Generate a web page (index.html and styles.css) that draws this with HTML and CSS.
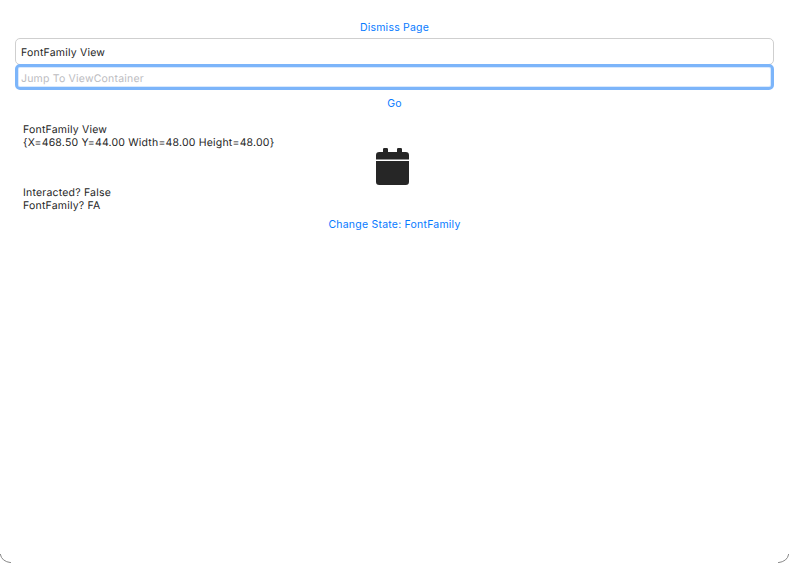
FILE: index.html
```html
<!DOCTYPE html>
<html lang="en">
<head>
<meta charset="utf-8">
<title>FontFamily View</title>
<link rel="stylesheet" href="styles.css">
</head>
<body>
<main class="window">
  <button class="link dismiss">Dismiss Page</button>
  <div class="field"><span>FontFamily View</span></div>
  <div class="field focused"><span class="placeholder">Jump To ViewContainer</span></div>
  <button class="link go">Go</button>
  <section class="details">
    <div class="text">FontFamily View<br>{X=468.50 Y=44.00 Width=48.00 Height=48.00}</div>
    <svg class="calendar" viewBox="0 0 36 38" aria-hidden="true">
      <path d="M1 11.500V7.300Q1 4 4.300 4H8V1.200Q8 0 9.200 0h2.600Q13 0 13 1.200V4h9V1.200Q22 0 23.200 0h2.600Q27 0 27 1.200V4h3.700Q34 4 34 7.300V11.500ZM1 13h33V33.700Q34 37 30.700 37h-26.400Q1 37 1 33.700Z"/>
    </svg>
    <div class="text">Interacted? False<br>FontFamily? FA</div>
  </section>
  <button class="link state">Change State: FontFamily</button>
  <svg class="corner left" viewBox="0 0 12 12" aria-hidden="true"><path d="M.3 3Q1.500 10.500 11 11.700"/></svg>
  <svg class="corner right" viewBox="0 0 12 12" aria-hidden="true"><path d="M11.700 3Q10.500 10.500 1 11.700"/></svg>
</main>
</body>
</html>
```
FILE: styles.css
```css
* { box-sizing: border-box; }
body {
  margin: 0;
  background: #fff;
  font: 10.5px/13px Inter, sans-serif;
  letter-spacing: 0.2px;
  text-rendering: geometricPrecision;
  color: #262626;
}
.window {
  position: relative;
  display: flex;
  flex-direction: column;
  height: 563px;
  padding: 21px 15px 0;
  overflow: hidden;
}
.link {
  align-self: center;
  height: 13px;
  padding: 0;
  border: 0;
  background: none;
  font: inherit;
  letter-spacing: 0.22px;
  color: #067aff;
  white-space: nowrap;
}
.dismiss { margin-bottom: 4px; }
.field {
  display: flex;
  align-items: center;
  height: 27px;
  padding: 1px 5px 0;
  border: 1px solid #cfcfcf;
  border-radius: 5px;
}
.focused {
  height: 26px;
  margin-top: -1px;
  padding: 2px 3px 0;
  border: 3px solid #7cb5fa;
  box-shadow: inset 0 0 0 1px #d9e9fd;
}
.placeholder { color: #bcbcbf; }
.go { margin-top: 7px; }
.details {
  display: flex;
  flex-direction: column;
  margin-top: 13px;
  padding-left: 8px;
}
.text { white-space: nowrap; }
.calendar {
  width: 36px;
  height: 38px;
  margin: -1px 0 0 352px;
  fill: #262626;
}
.state { margin-top: 6px; }
.corner {
  position: absolute;
  bottom: 0;
  width: 12px;
  height: 12px;
  fill: none;
  stroke: #888;
  stroke-width: 1;
}
.left { left: 0; }
.right { right: 0; }
```
